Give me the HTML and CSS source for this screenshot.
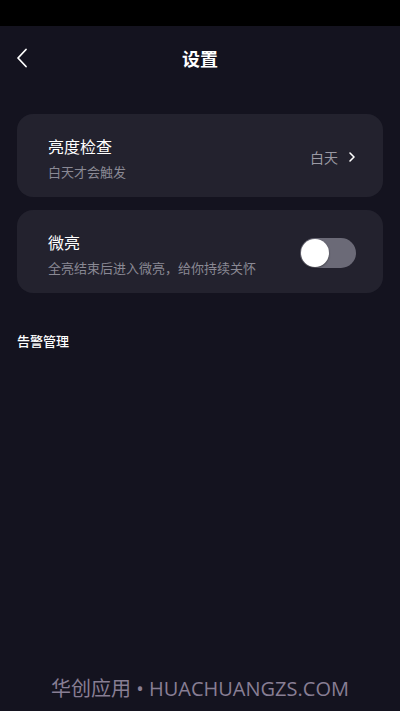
FILE: index.html
```html
<!DOCTYPE html>
<html lang="zh-CN">
<head>
<meta charset="utf-8">
<link rel="stylesheet" href="styles.css">
</head>
<body>
<div class="statusbar"></div>
<header class="nav">
  <span class="back">
    <svg width="14" height="22" viewBox="0 0 14 22"><path d="M11 2.5 L3 11 L11 19.5" fill="none" stroke="#fff" stroke-width="1.8" stroke-linecap="round" stroke-linejoin="round"/></svg>
  </span>
  <h1 class="title">设置</h1>
</header>
<main class="content">
  <section class="card">
    <div class="text">
      <div class="label">亮度检查</div>
      <div class="desc">白天才会触发</div>
    </div>
    <div class="value">
      <span>白天</span>
      <svg width="8" height="12" viewBox="0 0 8 12"><path d="M2 2 L6 6 L2 10" fill="none" stroke="#fff" stroke-width="1.6" stroke-linecap="round" stroke-linejoin="round"/></svg>
    </div>
  </section>
  <section class="card">
    <div class="text">
      <div class="label">微亮</div>
      <div class="desc">全亮结束后进入微亮，给你持续关怀</div>
    </div>
    <div class="toggle"><div class="knob"></div></div>
  </section>
  <div class="section-title">告警管理</div>
</main>
<footer class="watermark">华创应用 • HUACHUANGZS.COM</footer>
</body>
</html>
```
FILE: styles.css
```css
html, body {
  margin: 0;
  padding: 0;
}
body {
  width: 400px;
  height: 711px;
  background: #14131f;
  font-family: "Noto Sans CJK SC", "Noto Sans", sans-serif;
  color: #fff;
  display: flex;
  flex-direction: column;
  overflow: hidden;
}
.statusbar {
  height: 26px;
  background: #000;
  flex: none;
}
.nav {
  height: 64px;
  display: flex;
  align-items: center;
  justify-content: center;
  position: relative;
  flex: none;
}
.back {
  position: absolute;
  left: 15px;
  top: 21px;
  display: flex;
}
.title {
  margin: 0;
  font-size: 18px;
  font-weight: 700;
  line-height: 24px;
}
.content {
  flex: 1;
  padding: 24px 17px 0;
  display: flex;
  flex-direction: column;
  gap: 13px;
}
.card {
  background: #23222e;
  border-radius: 16px;
  padding: 21px 27px 16px 31px;
  display: flex;
  align-items: center;
  justify-content: space-between;
}
.text {
  display: flex;
  flex-direction: column;
  gap: 6px;
}
.label {
  font-size: 16px;
  line-height: 22px;
  font-weight: 400;
  color: #fff;
}
.desc {
  font-size: 13px;
  line-height: 18px;
  color: #8a8994;
}
.value {
  display: flex;
  align-items: center;
  gap: 10px;
  font-size: 14px;
  color: #9a99a3;
  margin-bottom: 2px;
}
.toggle {
  width: 56px;
  height: 30px;
  border-radius: 15px;
  background: #6b6a77;
  display: flex;
  align-items: center;
  padding: 0 1px;
  box-sizing: border-box;
  margin-bottom: 2px;
}
.knob {
  width: 28px;
  height: 28px;
  border-radius: 50%;
  background: #fff;
  box-shadow: 0 1px 2px rgba(0,0,0,0.4);
}
.section-title {
  margin-top: 26px;
  font-size: 13px;
  font-weight: 500;
  line-height: 18px;
}
.watermark {
  flex: none;
  height: 44px;
  text-align: center;
  font-size: 20px;
  line-height: 44px;
  color: #887e94;
  font-family: "Open Sans", "Noto Sans CJK SC", sans-serif;
}
```
